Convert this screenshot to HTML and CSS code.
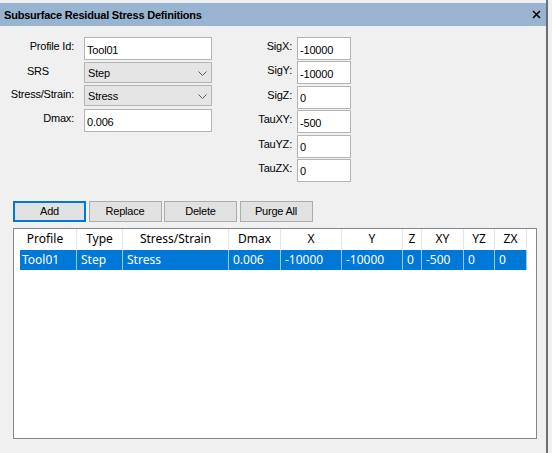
FILE: index.html
```html
<!DOCTYPE html>
<html>
<head>
    <link rel="stylesheet" href="styles.css">
</head>
<body>
    <div class="window">
        <div class="titlebar">
            <span class="title">Subsurface Residual Stress Definitions</span>
            <svg class="close" width="9" height="9" viewBox="0 0 9 9">
                <path d="M1 1L8 8M8 1L1 8" stroke="#000" stroke-width="1.6" fill="none"/>
            </svg>
        </div>

        <div class="content">
            <div class="fields">
                <div class="field-grid left">
                    <label>Profile Id:</label>
                    <input type="text" class="textbox" value="Tool01">

                    <label class="centered">SRS</label>
                    <div class="combo">
                        <span>Step</span>
                        <svg class="chevron" width="9" height="5" viewBox="0 0 9 5">
                            <polyline points="0.5,0.5 4.5,4.5 8.5,0.5" fill="none" stroke="#5a5a5a"/>
                        </svg>
                    </div>

                    <label>Stress/Strain:</label>
                    <div class="combo">
                        <span>Stress</span>
                        <svg class="chevron" width="9" height="5" viewBox="0 0 9 5">
                            <polyline points="0.5,0.5 4.5,4.5 8.5,0.5" fill="none" stroke="#5a5a5a"/>
                        </svg>
                    </div>

                    <label class="dmax">Dmax:</label>
                    <input type="text" class="textbox dmax" value="0.006">
                </div>

                <div class="field-grid right">
                    <label>SigX:</label>
                    <input type="text" class="textbox" value="-10000">
                    <label>SigY:</label>
                    <input type="text" class="textbox" value="-10000">
                    <label>SigZ:</label>
                    <input type="text" class="textbox" value="0">
                    <label>TauXY:</label>
                    <input type="text" class="textbox" value="-500">
                    <label>TauYZ:</label>
                    <input type="text" class="textbox" value="0">
                    <label>TauZX:</label>
                    <input type="text" class="textbox" value="0">
                </div>
            </div>

            <div class="buttons">
                <button class="btn default">Add</button>
                <button class="btn">Replace</button>
                <button class="btn">Delete</button>
                <button class="btn">Purge All</button>
            </div>

            <div class="listview">
                <div class="lv-head">
                    <div>Profile</div>
                    <div>Type</div>
                    <div>Stress/Strain</div>
                    <div>Dmax</div>
                    <div>X</div>
                    <div>Y</div>
                    <div>Z</div>
                    <div>XY</div>
                    <div>YZ</div>
                    <div>ZX</div>
                </div>
                <div class="lv-item selected">
                    <div>Tool01</div>
                    <div>Step</div>
                    <div>Stress</div>
                    <div>0.006</div>
                    <div>-10000</div>
                    <div>-10000</div>
                    <div>0</div>
                    <div>-500</div>
                    <div>0</div>
                    <div>0</div>
                </div>
            </div>
        </div>
    </div>
</body>
</html>
```

FILE: styles.css
```css
body {
    margin: 0;
    background-color: #f0f0f0;
    font-family: "Liberation Sans", Arial, sans-serif;
}

.window {
    width: 546px;
    height: 450px;
    padding-top: 3px;
    box-sizing: content-box;
    background-color: #f0f0f0;
    border-right: 2px solid #6e6e6e;
    border-bottom: 2px solid #6e6e6e;
}

.titlebar {
    height: 23px;
    background-color: #99b4d1;
    display: flex;
    align-items: center;
    justify-content: space-between;
    padding: 0 4px;
}

.title {
    font-weight: bold;
    font-size: 11px;
    letter-spacing: -0.2px;
    color: #000;
    padding-top: 1px;
}

.close {
    display: block;
    margin-right: 1px;
}

.content {
    padding-top: 11px;
}

.fields {
    display: flex;
}

.field-grid {
    display: grid;
    align-items: start;
}

.field-grid.left {
    grid-template-columns: 74px 128px;
    grid-template-rows: 23px 21px 21px 23px;
    column-gap: 10px;
    row-gap: 2px;
}

.field-grid.right {
    margin-left: 20px;
    grid-template-columns: 60px 54px;
    grid-auto-rows: 23px;
    column-gap: 5px;
    row-gap: 1.4px;
}

.field-grid label {
    text-align: right;
    font-size: 11px;
    letter-spacing: -0.2px;
    color: #000;
    padding-top: 3px;
}

.field-grid label.centered {
    text-align: center;
    padding-left: 2px;
}

.field-grid .dmax {
    margin-top: 1px;
}

.textbox {
    box-sizing: border-box;
    width: 100%;
    height: 23px;
    margin: 0;
    padding: 2px 2px 0;
    border: 1px solid #b4b4b4;
    border-radius: 0;
    background-color: #fff;
    font-family: "Liberation Sans", Arial, sans-serif;
    font-size: 11px;
    letter-spacing: -0.2px;
    color: #000;
    outline: none;
}

.combo {
    position: relative;
    box-sizing: border-box;
    height: 21px;
    border: 1px solid #b4b4b4;
    background-color: #e5e5e5;
    font-size: 11px;
    letter-spacing: -0.2px;
    padding: 4px 0 0 3px;
}

.chevron {
    position: absolute;
    right: 4px;
    top: 8px;
}

.buttons {
    display: flex;
    gap: 2.5px;
    margin-top: 19px;
    padding-left: 13px;
}

.btn {
    box-sizing: border-box;
    width: 73px;
    height: 21px;
    margin: 0;
    padding: 0;
    border: 1px solid #adadad;
    background-color: #e1e1e1;
    font-family: "Liberation Sans", Arial, sans-serif;
    font-size: 11px;
    letter-spacing: -0.2px;
    color: #000;
}

.btn.default {
    border: 2px solid #0078d7;
}

.listview {
    box-sizing: border-box;
    width: 524px;
    height: 211px;
    margin: 6px 0 0 13px;
    border: 1px solid #828790;
    background-color: #fff;
    font-family: "Noto Sans", "Open Sans", sans-serif;
    font-size: 12px;
}

.lv-head,
.lv-item {
    display: grid;
    height: 20px;
    line-height: 20px;
    white-space: nowrap;
}

.lv-head {
    grid-template-columns: 63px 46px 106px 52px 61px 61px 19px 42px 31px 32px;
    color: #000;
    margin-bottom: 1px;
}

.lv-head div {
    text-align: center;
    border-right: 1px solid #e5e5e5;
}

.lv-item {
    grid-template-columns: 57px 46px 106px 52px 61px 61px 19px 42px 31px 32px;
    padding-left: 6px;
}

.lv-item div {
    padding-left: 4px;
    border-right: 1px solid #9cc8ee;
    overflow: hidden;
}

.lv-item div:first-child {
    padding-left: 2px;
}

.lv-item.selected div {
    background-color: #0078d7;
    color: #fff;
}
```
